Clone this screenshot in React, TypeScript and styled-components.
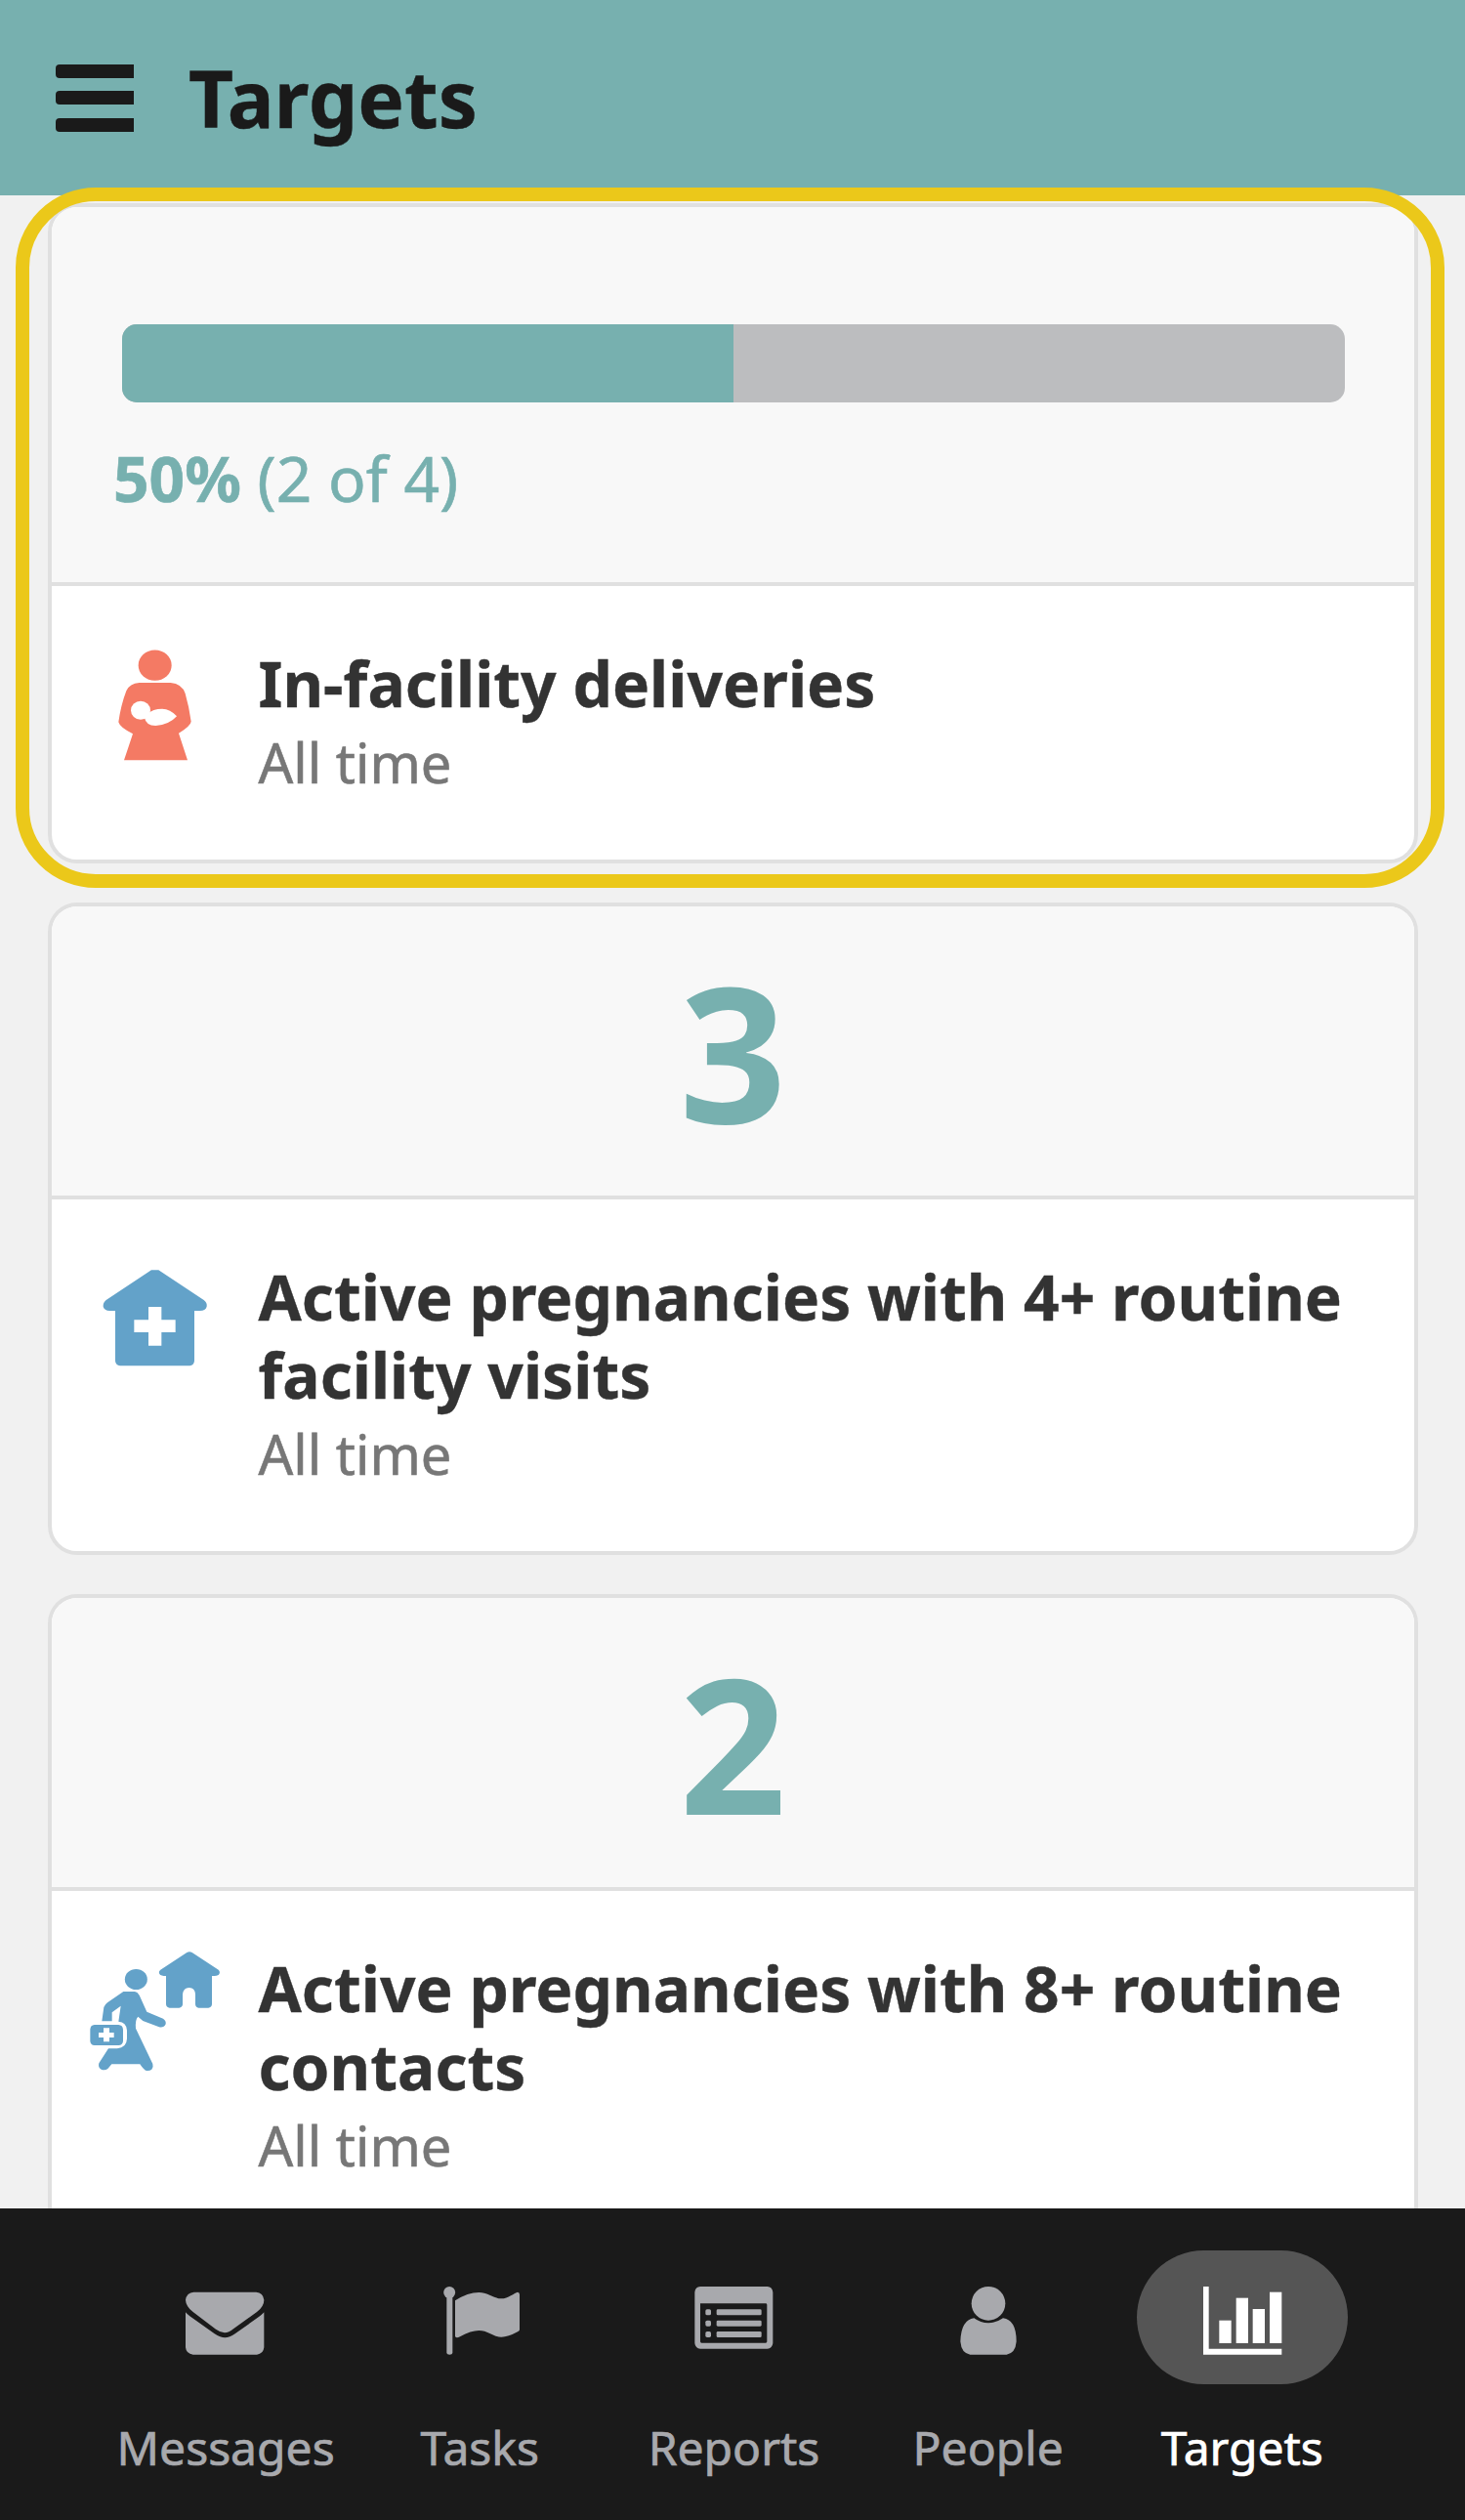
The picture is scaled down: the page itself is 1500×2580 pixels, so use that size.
import React from 'react';
import styled, { createGlobalStyle } from 'styled-components';

const teal = '#77b0af';
const coral = '#f47a64';
const blue = '#63a2c9';

const GlobalStyle = createGlobalStyle`
  *, *::before, *::after { box-sizing: border-box; }
  body {
    margin: 0;
    font-family: 'Noto Sans', 'Open Sans', sans-serif;
    background: #f1f1f1;
  }
`;

const Screen = styled.div`
  display: flex;
  flex-direction: column;
  width: 1500px;
  height: 2580px;
  overflow: hidden;
  background: #f1f1f1;
`;

const Header = styled.header`
  flex: none;
  display: flex;
  align-items: center;
  gap: 56px;
  height: 200px;
  padding-left: 57px;
  background: ${teal};
`;

const MenuButton = styled.button`
  display: flex;
  flex-direction: column;
  gap: 13.5px;
  width: 80px;
  padding: 0;
  border: 0;
  background: none;
`;

const MenuBar = styled.span`
  height: 14px;
  border-radius: 4px 0 0 4px;
  background: #1a1a1a;
`;

const Title = styled.h1`
  margin: 0;
  color: #1a1a1a;
  font-size: 80px;
  font-weight: 700;
  line-height: 198px;
  -webkit-text-stroke: 0.4px currentColor;
`;

const Main = styled.main`
  flex: 1;
  min-height: 0;
  display: flex;
  flex-direction: column;
  gap: 40px;
  padding: 8px 48px 0 49px;
`;

const CardSlot = styled.div`
  flex: none;
  position: relative;
`;

const Card = styled.section`
  overflow: hidden;
  border: 4px solid #e0e0e0;
  border-radius: 30px;
  background: #fff;
`;

const Highlight = styled.div`
  position: absolute;
  inset: -16.5px -27px -25px -33px;
  border: 14.5px solid #ebc81a;
  border-radius: 82px;
  pointer-events: none;
`;

const ProgressPanel = styled.div`
  height: 388px;
  padding: 120px 71px 0 63px;
  border-bottom: 4px solid #e0e0e0;
  background: #f8f8f8;
`;

const Track = styled.div`
  height: 80px;
  margin: 0 0 38px 9px;
  overflow: hidden;
  border-radius: 15px;
  background: #bcbdbf;
`;

const Fill = styled.div`
  height: 100%;
  background: ${teal};
`;

const ProgressText = styled.p`
  margin: 0;
  color: ${teal};
  font-size: 64px;
  line-height: 80px;
  -webkit-text-stroke: 0.6px currentColor;
`;

const CountPanel = styled.div`
  height: 300px;
  border-bottom: 4px solid #e0e0e0;
  background: #f8f8f8;
  color: ${teal};
  font-size: 192px;
  font-weight: 700;
  line-height: 296px;
  text-align: center;
`;

const CardBody = styled.div`
  display: flex;
  gap: 24.5px;
  padding: 0 40px 60px 27px;
`;

const CardIcon = styled.svg`
  flex: none;
  width: 160px;
  height: 160px;
  margin-top: 40px;
`;

const CardText = styled.div`
  padding-top: 60px;
`;

const CardTitle = styled.h2`
  margin: 0;
  color: #333;
  font-size: 64px;
  font-weight: 700;
  line-height: 80px;
  letter-spacing: 0.04px;
  -webkit-text-stroke: 0.4px currentColor;
`;

const CardPeriod = styled.p`
  margin: 0;
  color: #777;
  font-size: 56px;
  line-height: 80px;
  -webkit-text-stroke: 0.6px currentColor;
`;

const TabBar = styled.nav`
  flex: none;
  position: relative;
  z-index: 1;
  display: flex;
  height: 319.5px;
  padding: 43.5px 0 0 101px;
  background: #1a1a1a;
`;

const Tab = styled.a<{ $active?: boolean }>`
  display: flex;
  flex-direction: column;
  align-items: center;
  gap: 30px;
  width: 260.2px;
  color: ${(p) => (p.$active ? '#fff' : '#a8a9ad')};
`;

const TabPill = styled.span<{ $active?: boolean }>`
  display: flex;
  width: 216px;
  height: 137px;
  padding: 34px 0 0 66px;
  border-radius: 69px;
  background: ${(p) => (p.$active ? '#555' : 'transparent')};
`;

const TabIcon = styled.svg`
  width: 84px;
  height: 76px;
  fill: currentColor;
`;

const TabLabel = styled.span`
  font-size: 48px;
  line-height: 70px;
  white-space: nowrap;
  -webkit-text-stroke: 0.7px currentColor;
`;

const MotherIcon = () => (
  <CardIcon viewBox="0 0 480 480" fill={coral}>
    <ellipse cx="236" cy="123.500" rx="51" ry="47" />
    <path d="M188 177H284Q319 180 329 210Q341 252 347 296Q346 309 309 332L336 415H141L168 334Q128 314 124 298Q131 247 148 202Q158 179 188 177Z" />
    <g fill="#fff">
      <ellipse cx="192" cy="261.500" rx="30" ry="28.500" />
      <path d="M212 273Q230 257 258 257Q283 257 303 280Q280 306 238 309Q208 308 204 284Z" />
    </g>
  </CardIcon>
);

const ClinicIcon = () => (
  <CardIcon viewBox="0 -5 480 480" fill={blue}>
    <path d="M225 92H247L386 184Q397 192 395 204Q391 217 374 217H357V371Q356 385 343 386H129Q115 385 114 371V217H97Q80 216 77 204Q76 192 86 184Z" />
    <path fill="#fff" d="M216 205H256V245H299V283H256V324H216V283H172V245H216Z" />
  </CardIcon>
);

const HomeVisitIcon = () => (
  <CardIcon viewBox="0 -12 480 480" fill={blue}>
    <path d="M334 57Q342 53 350 57L431 110Q438 117 432 125Q428 129 411 129V216Q410 226 400 227H370Q361 226 360 216V185Q359 166 341 165Q323 166 321 185V217Q320 226 310 227H281Q271 226 270 216V129Q254 129 250 123Q246 116 253 110Z" />
    <ellipse cx="178" cy="139.500" rx="34.500" ry="31.500" />
    <path d="M139 177H174Q182 178 188 188L211 239L261 260Q271 267 269 277Q263 289 249 286L199 267L184 254Q175 262 177 290L229 399Q232 409 226 416Q218 422 207 419Q201 416 190 400H103L91 414Q82 421 71 416Q60 410 64 397L93 352H120Q149 350 150 322V296Q148 270 124 269L131 221L104 241V268H73L79 225Q82 217 90 211Z" />
    <path d="M50 279H124Q137 280 138 293V329Q137 341 124 342H50Q38 341 37 329V293Q38 280 50 279Z" />
    <path fill="#fff" d="M78 289H96V303H110V318H96V331H78V318H63V303H78Z" />
  </CardIcon>
);

const MailIcon = () => (
  <TabIcon viewBox="268 294 252 228">
    <path d="M296 320H488Q509 321 512 344Q512 364 490 381L418 433Q404 445 391 445Q378 444 364 434L294 381Q272 364 271 344Q274 322 296 320Z" />
    <path d="M271 382Q277 389 284 394L360 448Q378 460 392 460Q406 460 423 448L499 394Q507 388 512 382V490Q510 510 490 512H294Q273 510 271 490Z" />
  </TabIcon>
);

const FlagIcon = () => (
  <TabIcon viewBox="1048 294 252 228">
    <circle cx="1081.500" cy="321" r="18" />
    <path d="M1073 330H1091V507Q1090 512 1082 512Q1074 512 1073 507Z" />
    <path d="M1099 346Q1138 321 1172 321C1200 321 1218 340 1241 340C1261 340 1282 322 1291 320Q1297 321 1297 328V436Q1297 439 1291 442Q1262 458 1241 458C1216 458 1202 438 1172 438Q1148 438 1114 457Q1101 463 1099 455Z" />
  </TabIcon>
);

const ListIcon = () => (
  <TabIcon viewBox="270 294 252 228">
    <path
      fillRule="evenodd"
      d="M294 303H500Q515 304 517 320V477Q515 493 500 494H294Q279 493 277 477V320Q279 304 294 303ZM294 355V472Q294 476 298 476H495Q499 476 499 472V359Q499 355 495 355Z"
    />
    <rect x="310" y="373" width="17" height="18" rx="5" />
    <rect x="310" y="407" width="17" height="18" rx="5" />
    <rect x="310" y="441" width="17" height="18" rx="5" />
    <rect x="344" y="373" width="138" height="18" rx="4" />
    <rect x="344" y="407" width="138" height="18" rx="4" />
    <rect x="344" y="441" width="138" height="18" rx="4" />
  </TabIcon>
);

const PersonIcon = () => (
  <TabIcon viewBox="1050 294 252 228">
    <circle cx="1176" cy="355" r="52" />
    <path d="M1132 400Q1152 415 1176 415Q1200 415 1221 400Q1262 405 1262 472Q1259 508 1232 512H1120Q1093 508 1090 472Q1092 405 1132 400Z" />
  </TabIcon>
);

const ChartIcon = () => (
  <TabIcon viewBox="391 294 252 228">
    <path d="M397 303H414V494H638V512H397Z" />
    <rect x="446" y="407" width="37" height="70" />
    <rect x="498" y="338" width="37" height="139" />
    <rect x="549" y="372" width="37" height="105" />
    <rect x="601" y="320" width="37" height="157" />
  </TabIcon>
);

const progress = { done: 2, total: 4 };
const percent = (progress.done / progress.total) * 100;

const countTargets = [
  { count: 3, title: 'Active pregnancies with 4+ routine facility visits', Icon: ClinicIcon },
  { count: 2, title: 'Active pregnancies with 8+ routine contacts', Icon: HomeVisitIcon },
];

const tabs = [
  { label: 'Messages', Icon: MailIcon },
  { label: 'Tasks', Icon: FlagIcon },
  { label: 'Reports', Icon: ListIcon },
  { label: 'People', Icon: PersonIcon },
  { label: 'Targets', Icon: ChartIcon, active: true },
];

function TargetInfo({ title, Icon }: { title: string; Icon: React.ComponentType }) {
  return (
    <CardBody>
      <Icon />
      <CardText>
        <CardTitle>{title}</CardTitle>
        <CardPeriod>All time</CardPeriod>
      </CardText>
    </CardBody>
  );
}

export default function App() {
  return (
    <Screen>
      <GlobalStyle />
      <Header>
        <MenuButton aria-label="Menu">
          <MenuBar />
          <MenuBar />
          <MenuBar />
        </MenuButton>
        <Title>Targets</Title>
      </Header>
      <Main>
        <CardSlot>
          <Card>
            <ProgressPanel>
              <Track>
                <Fill style={{ width: `${percent}%` }} />
              </Track>
              <ProgressText>
                <b>{percent}%</b> ({progress.done} of {progress.total})
              </ProgressText>
            </ProgressPanel>
            <TargetInfo title="In-facility deliveries" Icon={MotherIcon} />
          </Card>
          <Highlight />
        </CardSlot>
        {countTargets.map(({ count, title, Icon }) => (
          <CardSlot key={title}>
            <Card>
              <CountPanel>{count}</CountPanel>
              <TargetInfo title={title} Icon={Icon} />
            </Card>
          </CardSlot>
        ))}
      </Main>
      <TabBar>
        {tabs.map(({ label, Icon, active }) => (
          <Tab key={label} $active={active}>
            <TabPill $active={active}>
              <Icon />
            </TabPill>
            <TabLabel>{label}</TabLabel>
          </Tab>
        ))}
      </TabBar>
    </Screen>
  );
}
